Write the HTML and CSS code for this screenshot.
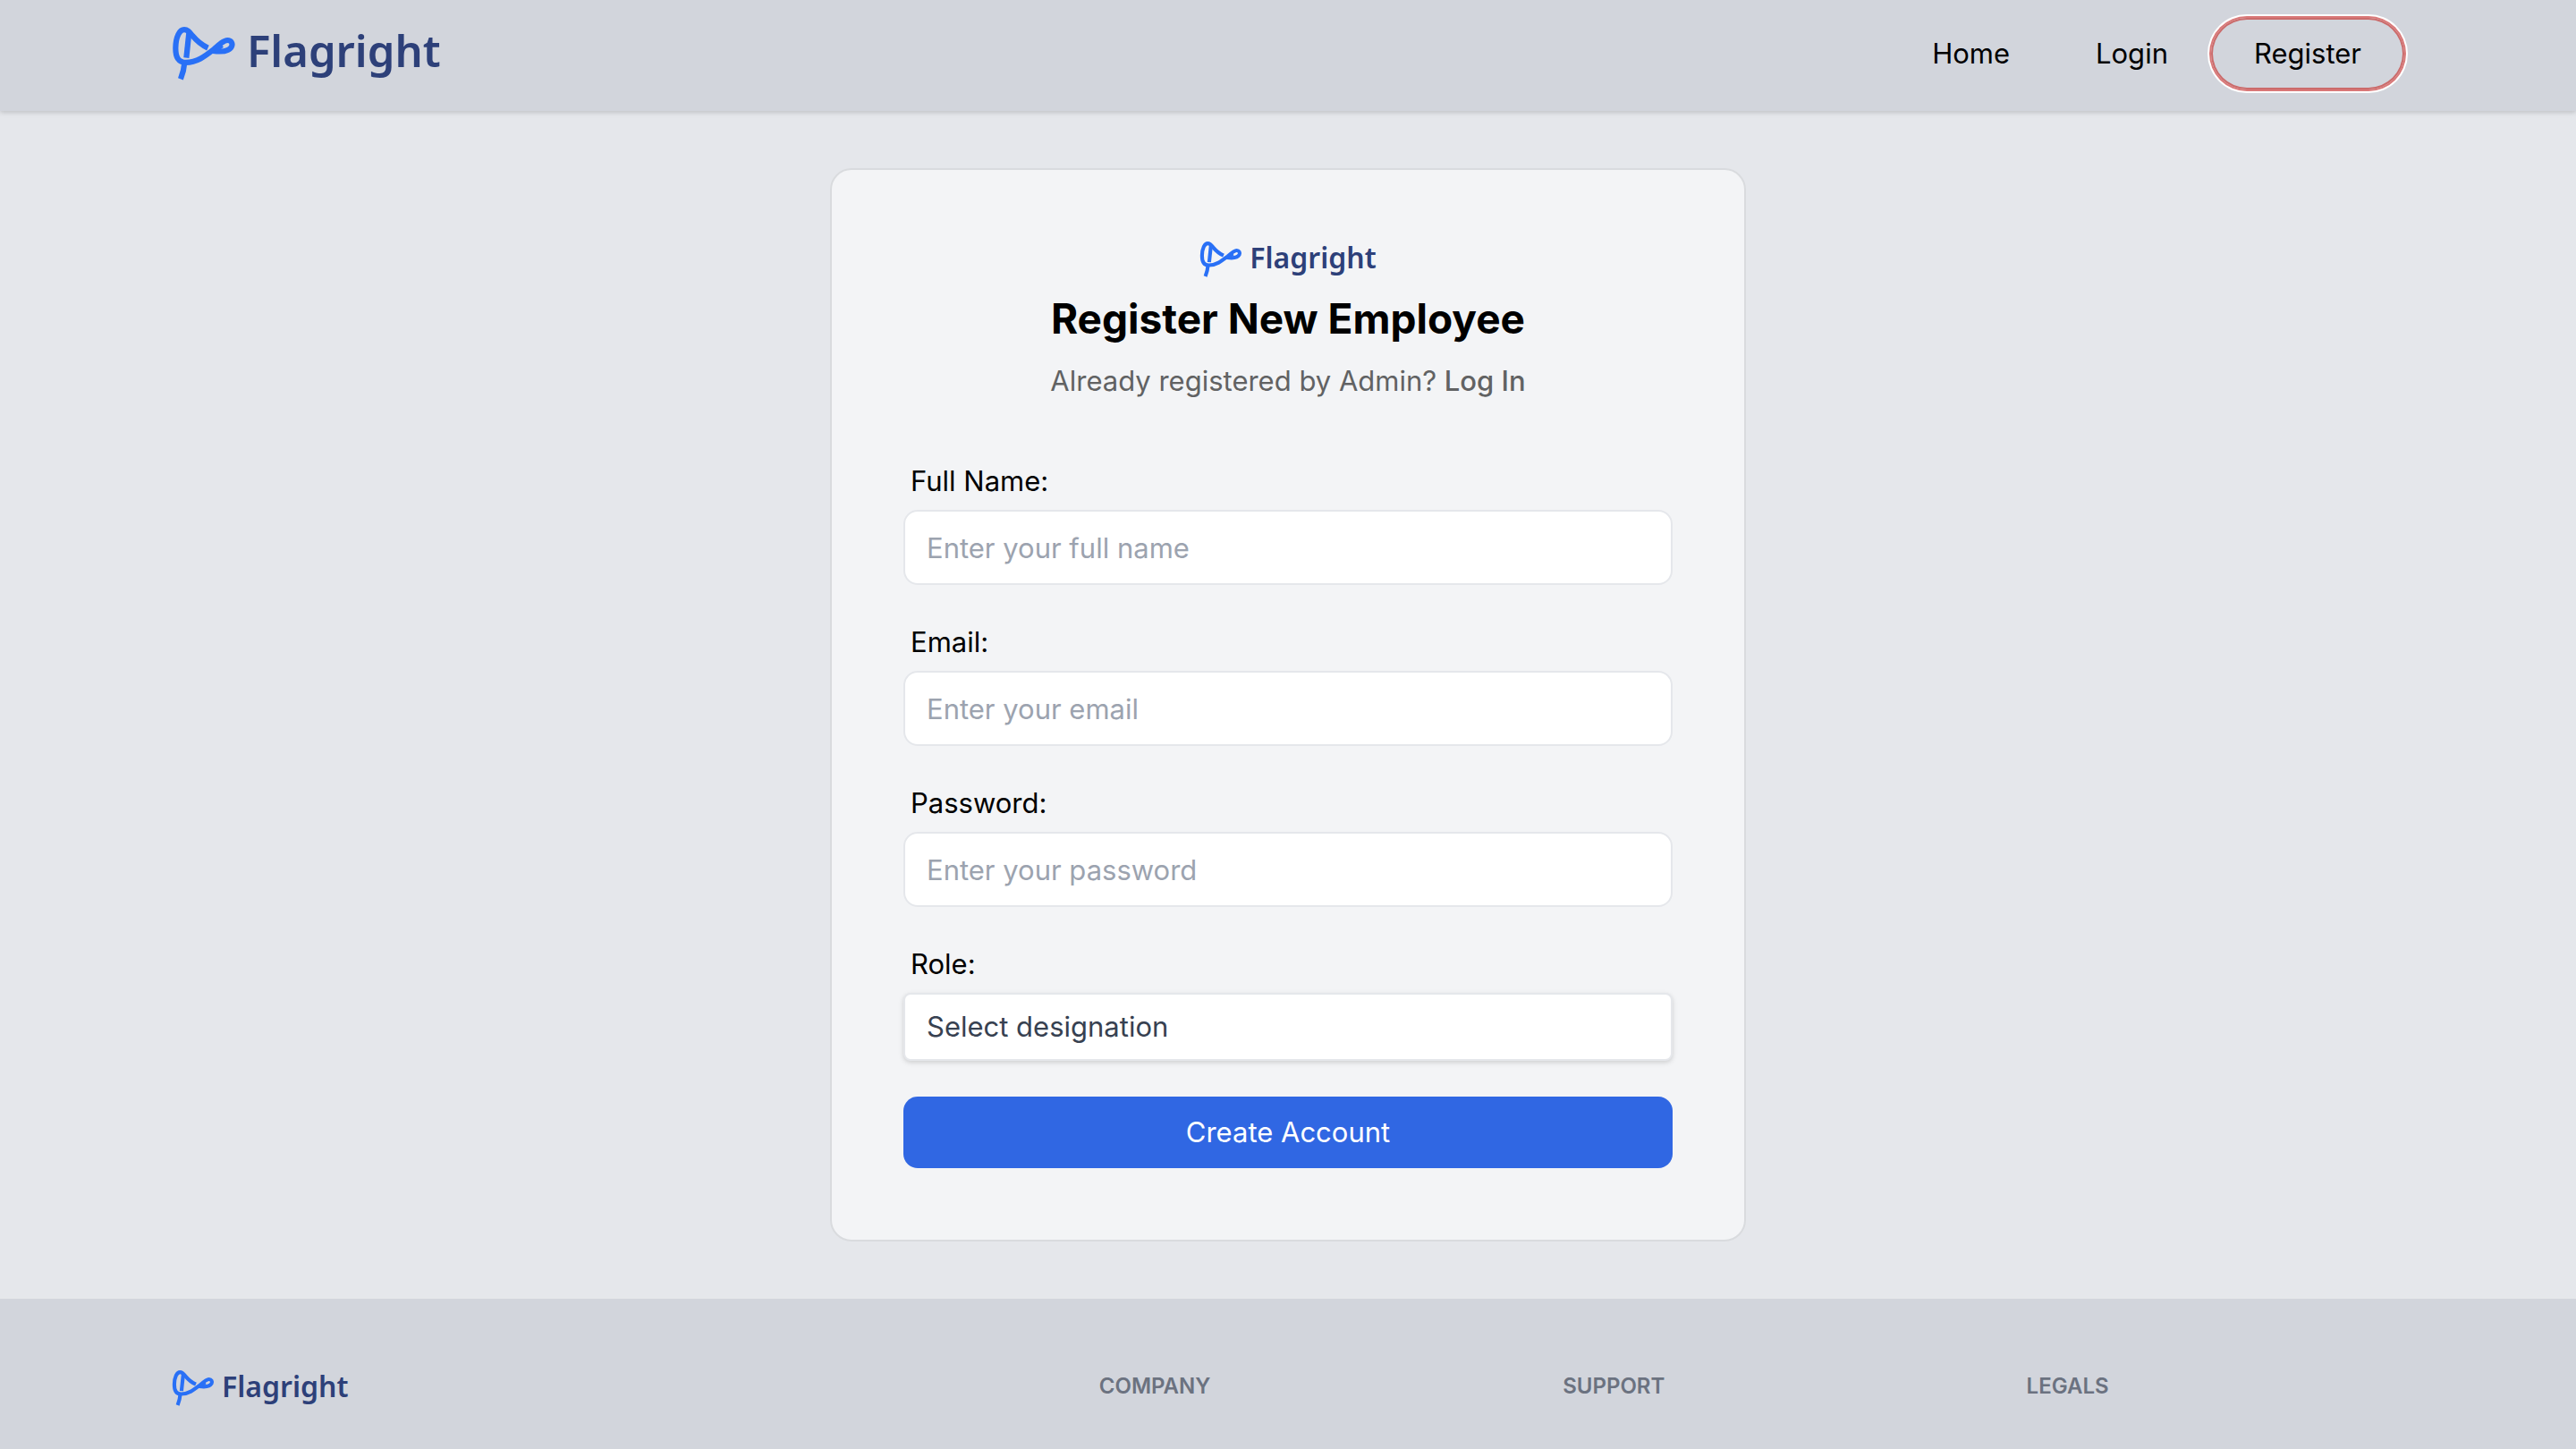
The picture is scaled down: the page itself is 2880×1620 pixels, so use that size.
FILE: index.html
```html
<!DOCTYPE html>
<html lang="en">
<head>
<meta charset="utf-8">
<meta name="viewport" content="width=device-width, initial-scale=1">
<title>Flagright</title>
<link rel="stylesheet" href="styles.css">
</head>
<body>
<svg class="sprite" aria-hidden="true">
  <symbol id="flag" viewBox="0 0 68 58">
    <g fill="none" stroke="currentColor" stroke-width="6">
      <path d="M38.300 22.800C31 19.500 26.500 15.500 21.500 9.500C18 5 16 3 12.700 3C7.500 3 3.600 11 3.400 22.500C3.200 33 6.500 38.500 14.500 38.500C27 38.500 36 31 45 24C50.500 19 55.500 14.500 59.500 14.500C63.500 14.500 65.500 18 63.800 21.500C61 26.500 53 27.300 44 26"/>
      <path d="M17.800 7L15 33.500"/>
      <path d="M13 39C12.500 46 11 51 8.800 56.500"/>
      <path d="M46 26.500L54 20.500" stroke-width="4"/>
    </g>
  </symbol>
</svg>

<header class="header">
  <div class="container header-row">
    <a class="logo logo-large" href="#"><svg class="logo-mark" aria-hidden="true"><use href="#flag"/></svg><span>Flagright</span></a>
    <nav class="nav">
      <a class="nav-link" href="#">Home</a>
      <a class="nav-link" href="#">Login</a>
      <a class="nav-link nav-link-active" href="#">Register</a>
    </nav>
  </div>
</header>

<main class="main">
  <section class="card">
    <div class="card-head">
      <a class="logo" href="#"><svg class="logo-mark" aria-hidden="true"><use href="#flag"/></svg><span>Flagright</span></a>
      <h1 class="title">Register New Employee</h1>
      <p class="subtitle">Already registered by Admin? <a class="subtitle-link" href="#">Log In</a></p>
    </div>
    <form class="form">
      <div class="field">
        <label class="label" for="name">Full Name:</label>
        <input class="input" id="name" type="text" placeholder="Enter your full name">
      </div>
      <div class="field">
        <label class="label" for="email">Email:</label>
        <input class="input" id="email" type="email" placeholder="Enter your email">
      </div>
      <div class="field">
        <label class="label" for="password">Password:</label>
        <input class="input" id="password" type="password" placeholder="Enter your password">
      </div>
      <div class="field">
        <label class="label" for="role">Role:</label>
        <select class="select" id="role"><option>Select designation</option></select>
      </div>
      <button class="submit" type="button">Create Account</button>
    </form>
  </section>
</main>

<footer class="footer">
  <div class="container footer-grid">
    <div class="footer-brand"><a class="logo" href="#"><svg class="logo-mark" aria-hidden="true"><use href="#flag"/></svg><span>Flagright</span></a></div>
    <h2 class="footer-title">COMPANY</h2>
    <h2 class="footer-title">SUPPORT</h2>
    <h2 class="footer-title">LEGALS</h2>
  </div>
</footer>
</body>
</html>
```
FILE: styles.css
```css
* {
  box-sizing: border-box;
  margin: 0;
}

body {
  display: flex;
  flex-direction: column;
  min-height: 100vh;
  background: #e5e7eb;
  color: #000;
  font-family: Inter, "Liberation Sans", sans-serif;
  font-size: 31px;
  line-height: 48px;
}

a {
  color: inherit;
  text-decoration: none;
}

.sprite {
  display: none;
}

.container {
  width: 100%;
  max-width: 2560px;
  margin: 0 auto;
  padding: 0 32px;
}

/* Logo */
.logo {
  display: inline-flex;
  align-items: flex-start;
  gap: 8px;
  color: #2d4079;
  font-family: "Noto Sans", sans-serif;
  font-size: 32px;
  font-weight: 600;
  line-height: 36px;
}

.logo-mark {
  width: 48px;
  height: 40px;
  color: #2970f6;
}

.logo-large {
  gap: 12px;
  font-size: 49px;
  line-height: 52px;
}

.logo-large .logo-mark {
  width: 72px;
  height: 60px;
}

/* Header */
.header {
  position: relative;
  background: #d2d5dc;
  box-shadow: 0 2px 6px rgba(0, 0, 0, 0.1), 0 2px 4px rgba(0, 0, 0, 0.06);
}

.header-row {
  display: flex;
  align-items: center;
  justify-content: space-between;
  height: 124px;
  padding-bottom: 4px;
}

.nav {
  display: flex;
}

.nav-link {
  padding: 16px 48px;
  border-radius: 40px;
}

.nav-link-active {
  box-shadow: inset 0 0 0 2px #cb6b6b, 0 0 0 2px #d97878, 0 0 0 4px #fff;
}

/* Registration card */
.main {
  padding: 64px 32px;
}

.card {
  max-width: 1024px;
  margin: 0 auto;
  padding: 80px;
  border: 2px solid #d9dbde;
  border-radius: 24px;
  background: #f3f4f6;
}

.card-head {
  display: flex;
  flex-direction: column;
  align-items: center;
}

.title {
  margin-top: 16px;
  font-size: 46px;
  font-weight: 700;
  line-height: 60px;
}

.subtitle {
  margin-top: 16px;
  color: #616263;
}

.subtitle-link {
  font-weight: 500;
}

.form {
  display: grid;
  gap: 40px;
  margin-top: 64px;
}

.field {
  display: grid;
  gap: 8px;
}

.label {
  padding-left: 8px;
}

.input,
.select {
  width: 100%;
  padding: 0 24px;
  border: 2px solid #e5e7eb;
  background: #fff;
  font: inherit;
}

.input {
  height: 84px;
  border-radius: 16px;
}

.input::placeholder {
  color: #9ca3af;
}

.select {
  height: 76px;
  border-radius: 8px;
  appearance: none;
  color: #374151;
  box-shadow: 0 2px 6px rgba(0, 0, 0, 0.1), 0 2px 4px rgba(0, 0, 0, 0.06);
}

.submit {
  height: 80px;
  border: 0;
  border-radius: 16px;
  background: #3067e3;
  color: #fff;
  font: inherit;
}

/* Footer */
.footer {
  flex: 1;
  padding: 80px 0 32px;
  background: #d2d5dc;
}

.footer-grid {
  display: grid;
  grid-template-columns: repeat(5, 1fr);
  gap: 96px;
}

.footer-brand {
  grid-column: span 2;
}

.footer-title {
  color: #6b7280;
  font-size: 24px;
  font-weight: 600;
  line-height: 36px;
}
```
